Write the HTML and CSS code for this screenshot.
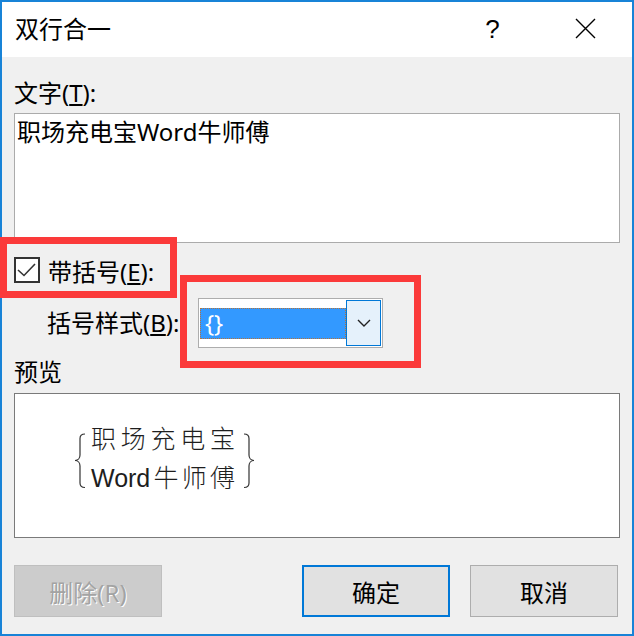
FILE: index.html
```html
<!DOCTYPE html>
<html lang="zh-CN">
<head>
    <meta charset="UTF-8">
    <title>双行合一</title>
    <link rel="stylesheet" href="styles.css">
</head>
<body>
    <div class="dialog">
        <div class="titlebar">
            <span class="title">双行合一</span>
            <span class="tb-btn help">?</span>
            <span class="tb-btn close">
                <svg width="21" height="21" viewBox="0 0 21 21"><path d="M1 1 L20 20 M20 1 L1 20" stroke="#000" stroke-width="1.4" fill="none"/></svg>
            </span>
        </div>

        <div class="content">
            <div class="label first">文字(<u>T</u>):</div>
            <div class="textbox">职场充电宝Word牛师傅</div>

            <div class="check-row">
                <span class="checkbox">
                    <svg width="26" height="26" viewBox="0 0 26 26"><path d="M4 13 L10 18.5 L21 7" stroke="#333" stroke-width="1.6" fill="none"/></svg>
                </span>
                <span class="check-label">带括号(<u>E</u>):</span>
            </div>

            <div class="combo-row">
                <span class="combo-label">括号样式(<u>B</u>):</span>
                <div class="combo">
                    <span class="combo-value">{}</span>
                    <span class="combo-arrow">
                        <svg width="14" height="8" viewBox="0 0 14 8"><path d="M1 1 L7 7 L13 1" stroke="#222" stroke-width="1.4" fill="none"/></svg>
                    </span>
                </div>
            </div>

            <div class="label preview-label">预览</div>
            <div class="preview">
                <svg class="brace" width="12" height="56" viewBox="0 0 12 56"><path d="M11 1 C8 1 6 2.5 6 5.5 L6 22 C6 25 4 27.5 1 27.5 C4 27.5 6 30 6 33 L6 50 C6 53 8 54.5 11 54.5" stroke="#333" stroke-width="1.2" fill="none"/></svg>
                <div class="preview-text">
                    <div class="pline"><span>职</span><span>场</span><span>充</span><span>电</span><span>宝</span></div>
                    <div class="pline"><span>Word</span><span>牛</span><span>师</span><span>傅</span></div>
                </div>
                <svg class="brace right" width="12" height="56" viewBox="0 0 12 56"><path d="M1 1 C4 1 6 2.5 6 5.5 L6 22 C6 25 8 27.5 11 27.5 C8 27.5 6 30 6 33 L6 50 C6 53 4 54.5 1 54.5" stroke="#333" stroke-width="1.2" fill="none"/></svg>
            </div>

            <div class="buttons">
                <button class="btn disabled">删除(R)</button>
                <span class="spacer"></span>
                <button class="btn default">确定</button>
                <button class="btn cancel">取消</button>
            </div>
        </div>
    </div>

    <!-- red annotation frames drawn over the dialog -->
    <div class="mark mark-check"></div>
    <div class="mark mark-combo"></div>
</body>
</html>
```

FILE: styles.css
```css
body {
    margin: 0;
    font-family: "Noto Sans", "Noto Sans CJK SC", sans-serif;
    font-size: 24px;
    color: #000;
}
.dialog {
    box-sizing: border-box;
    width: 634px;
    height: 636px;
    border: 2px solid #1883d7;
    background-color: #f0f0f0;
}
.titlebar {
    display: flex;
    align-items: center;
    height: 55px;
    background-color: #fff;
}
.title {
    flex: 1;
    padding-left: 13px;
    padding-bottom: 2px;
    line-height: 24px;
}
.tb-btn {
    width: 93px;
    display: flex;
    justify-content: center;
    align-items: center;
}
.help {
    font-family: "Liberation Sans", sans-serif;
    font-size: 26px;
    line-height: 26px;
    padding-bottom: 2px;
}
.close svg {
    display: block;
    margin-top: -2px;
}
.content {
    padding: 0 12px;
}
.label {
    line-height: 24px;
}
.label.first {
    margin-top: 24px;
}
.textbox {
    box-sizing: border-box;
    margin-top: 8px;
    height: 130px;
    border: 1px solid #ababab;
    background-color: #fff;
    padding: 6px 2px;
    line-height: 24px;
}
.check-row {
    display: flex;
    align-items: center;
    margin-top: 14px;
    height: 26px;
}
.checkbox {
    box-sizing: border-box;
    width: 26px;
    height: 26px;
    border: 2px solid #333;
    background-color: #fff;
}
.checkbox svg {
    display: block;
    margin: -2px;
}
.check-label {
    margin-left: 8px;
    padding-top: 4px;
    line-height: 24px;
}
.combo-row {
    display: flex;
    align-items: center;
    margin-top: 15px;
    height: 50px;
}
.combo-label {
    width: 151px;
    padding-left: 33px;
    line-height: 24px;
}
.combo {
    box-sizing: border-box;
    display: flex;
    align-items: center;
    width: 185px;
    height: 50px;
    border: 1px solid #adadad;
    padding: 1px;
    background-color: #fff;
}
.combo-value {
    box-sizing: border-box;
    flex: 1;
    height: 31px;
    background-color: #3399ff;
    border: 1px dotted #b4733a;
    color: #fff;
    padding-left: 4px;
    line-height: 28px;
}
.combo-arrow {
    box-sizing: border-box;
    width: 35px;
    height: 46px;
    border: 1px solid #0078d7;
    background-color: #e5f1fb;
    display: flex;
    justify-content: center;
    align-items: center;
}
.preview-label {
    margin-top: 12px;
}
.preview {
    box-sizing: border-box;
    display: flex;
    align-items: flex-start;
    margin-top: 9px;
    height: 145px;
    border: 1px solid #7a7a7a;
    background-color: #fff;
    padding: 26px 0 0 59px;
}
.brace {
    margin-top: 13px;
}
.preview-text {
    width: 144px;
    margin: 0 8px 0 5px;
    font-family: "Liberation Sans", "Noto Sans CJK SC", sans-serif;
    font-size: 25px;
    font-weight: 300;
    color: #1e1e1e;
}
.pline {
    display: flex;
    justify-content: space-between;
    line-height: 39px;
}
.buttons {
    display: flex;
    margin-top: 27px;
    padding-right: 2px;
}
.spacer {
    flex: 1;
}
.btn {
    box-sizing: border-box;
    width: 148px;
    height: 52px;
    font-family: inherit;
    font-size: 24px;
    color: #000;
    background-color: #e1e1e1;
    border: 1px solid #adadad;
    padding: 0;
}
.btn.disabled {
    background-color: #cccccc;
    border-color: #bfbfbf;
    color: #a3a3a3;
    text-shadow: 1px 1px 0 #fff;
}
.btn.default {
    border: 2px solid #0078d7;
}
.btn.cancel {
    margin-left: 20px;
}
.mark {
    position: absolute;
    box-sizing: border-box;
    border: 7px solid #fb3a3a;
}
.mark-check {
    left: 0;
    top: 237px;
    width: 177px;
    height: 61px;
}
.mark-combo {
    left: 180px;
    top: 275px;
    width: 241px;
    height: 93px;
}
```
